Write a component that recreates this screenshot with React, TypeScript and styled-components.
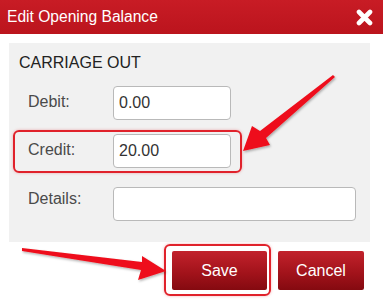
import React from 'react';
import styled, { createGlobalStyle } from 'styled-components';

const GlobalStyle = createGlobalStyle`
  html, body {
    margin: 0;
    padding: 0;
    background: #ffffff;
  }
  body {
    font-family: 'Liberation Sans', Arial, sans-serif;
  }
`;

// Estilos
const Dialog = styled.div`
  position: relative;
  width: 383px;
  height: 302px;
  background: #ffffff;
  overflow: hidden;
`;

const Header = styled.div`
  height: 34px;
  background: linear-gradient(#c81c25, #bb141d);
  display: flex;
  align-items: center;
  justify-content: space-between;
  padding: 0 10px 0 7px;
  box-sizing: border-box;
`;

const Title = styled.h1`
  margin: 0;
  font-size: 15.6px;
  font-weight: normal;
  color: #ffffff;
  line-height: 18px;
`;

const CloseButton = styled.button`
  border: none;
  background: transparent;
  padding: 0;
  width: 17px;
  height: 17px;
  display: flex;
  cursor: pointer;
`;

const Body = styled.div`
  padding: 9px 13px 0 9px;
`;

const Panel = styled.section`
  background: #f1f1f1;
  padding: 11px 0 16px 4px;
`;

const Heading = styled.h2`
  margin: 0 0 10px 6px;
  font-size: 16px;
  font-weight: normal;
  line-height: 18px;
  color: #222;
`;

const Rows = styled.div`
  display: flex;
  flex-direction: column;
  gap: 5px;
`;

const Row = styled.div<{ $highlight?: boolean; $top?: boolean; $spaced?: boolean }>`
  display: flex;
  align-items: ${p => (p.$top ? 'flex-start' : 'center')};
  width: fit-content;
  padding: 2px 9px 3px 13px;
  margin-top: ${p => (p.$spaced ? '5px' : '0')};
  border: 2px solid ${p => (p.$highlight ? '#e0222b' : 'transparent')};
  border-radius: 6px;
  box-shadow: ${p => (p.$highlight ? '0 0 3px rgba(224, 34, 43, 0.35)' : 'none')};
`;

const Label = styled.label<{ $top?: boolean }>`
  width: 85px;
  font-size: 16px;
  line-height: 18px;
  color: #4a4a4a;
  margin-top: ${p => (p.$top ? '3px' : '-2px')};
`;

const Input = styled.input<{ $wide?: boolean }>`
  box-sizing: border-box;
  width: ${p => (p.$wide ? '243px' : '118px')};
  height: 34px;
  padding: 0 5px;
  border: 1px solid #b9b9b9;
  border-radius: 4px;
  background: #ffffff;
  font-family: inherit;
  font-size: 16px;
  color: #333;
  outline: none;
`;

const Footer = styled.div`
  display: flex;
  justify-content: flex-end;
  align-items: flex-start;
  gap: 7px;
  padding: 2px 19px 0 0;
`;

const SaveFrame = styled.div`
  padding: 5px 2px 4px 6px;
  border: 2px solid #e0222b;
  border-radius: 6px;
  box-shadow: 0 0 3px rgba(224, 34, 43, 0.35);
  display: flex;
`;

const Button = styled.button<{ $width: number }>`
  width: ${p => p.$width}px;
  height: 39px;
  border: none;
  border-radius: 2px;
  background: linear-gradient(#c2222c, #a3131b 55%, #840a10);
  color: #ffffff;
  font-family: inherit;
  font-size: 16px;
  cursor: pointer;
  padding: 0;
`;

const CancelButton = styled(Button)`
  margin-top: 7px;
`;

const Annotations = styled.svg`
  position: absolute;
  left: 0;
  top: 0;
  pointer-events: none;
`;

const CloseIcon = () => (
  <svg width="17" height="17" viewBox="0 0 17 17">
    <path d="M3 3 L14 14 M14 3 L3 14" stroke="#ffffff" strokeWidth="4.6" strokeLinecap="round" />
  </svg>
);

export default function App() {
  return (
    <Dialog>
      <GlobalStyle />
      <Header>
        <Title>Edit Opening Balance</Title>
        <CloseButton aria-label="Close">
          <CloseIcon />
        </CloseButton>
      </Header>

      <Body>
        <Panel>
          <Heading>CARRIAGE OUT</Heading>
          <Rows>
            <Row>
              <Label htmlFor="debit">Debit:</Label>
              <Input id="debit" defaultValue="0.00" />
            </Row>
            <Row $highlight>
              <Label htmlFor="credit">Credit:</Label>
              <Input id="credit" defaultValue="20.00" />
            </Row>
            <Row $top $spaced>
              <Label htmlFor="details" $top>Details:</Label>
              <Input id="details" $wide />
            </Row>
          </Rows>
        </Panel>
      </Body>

      <Footer>
        <SaveFrame>
          <Button $width={95}>Save</Button>
        </SaveFrame>
        <CancelButton $width={86}>Cancel</CancelButton>
      </Footer>

      <Annotations width="383" height="302" viewBox="0 0 383 302">
        <defs>
          <filter id="shadow" x="-10%" y="-10%" width="130%" height="130%">
            <feDropShadow dx="1" dy="1.5" stdDeviation="1.2" floodColor="#000" floodOpacity="0.3" />
          </filter>
        </defs>
        <g fill="#ee111b" filter="url(#shadow)">
          <polygon points="335,77 266,138 270,145 243,151 252,126 260,131 333,75" />
          <polygon points="22,248 142,262 142,256 166,271 138,280 141,270 22,251" />
        </g>
      </Annotations>
    </Dialog>
  );
}
